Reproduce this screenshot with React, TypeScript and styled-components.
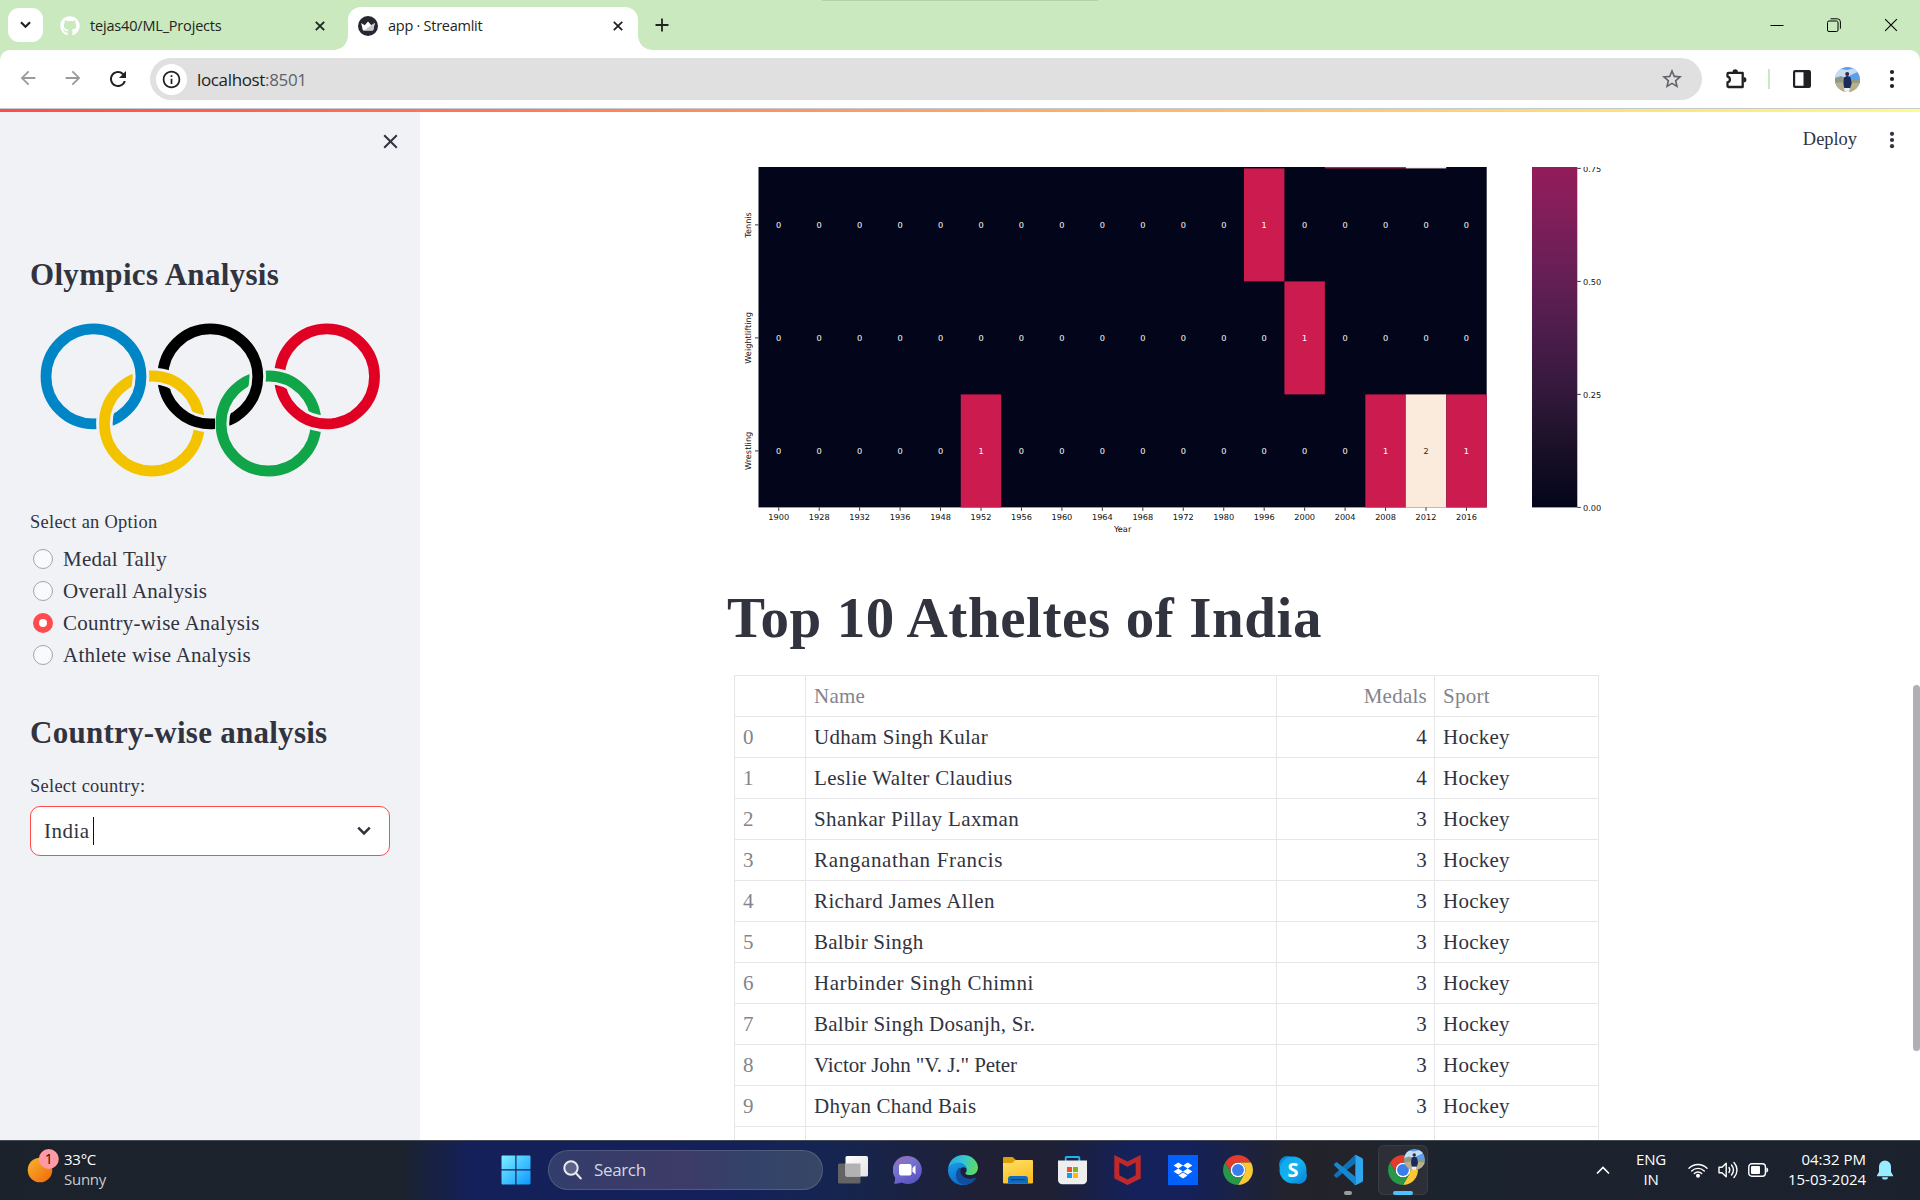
import React from "react";
import styled, { createGlobalStyle } from "styled-components";
import { FaGithub } from "react-icons/fa";
import { MdArrowBack, MdArrowForward, MdRefresh, MdInfoOutline, MdStarBorder } from "react-icons/md";

const GlobalStyle = createGlobalStyle`
  * { box-sizing: border-box; }
  html, body { margin: 0; padding: 0; overflow: hidden; }
`;

const serif = `"Source Serif Pro", "Liberation Serif", serif`;
const ui = `"Segoe UI", "Open Sans", "Noto Sans", sans-serif`;
const ink = "#31333f";

const Screen = styled.div`
  width: 1920px;
  height: 1200px;
  display: flex;
  flex-direction: column;
  background: #fff;
  overflow: hidden;
`;

/* ---------- browser chrome ---------- */

const TabStrip = styled.div`
  position: relative;
  height: 50px;
  flex: none;
  display: flex;
  align-items: center;
  background: #cae9be;
  font-family: ${ui};
  color: #1f2420;
`;

const TopShade = styled.div`
  position: absolute;
  left: 822px;
  top: 0;
  width: 276px;
  height: 1px;
  background: #b5d1ab;
`;

const TabSearch = styled.div`
  width: 35px;
  height: 34px;
  margin-left: 8px;
  border-radius: 11px;
  background: #fff;
  display: grid;
  place-items: center;
`;

const Tab = styled.div<{ $active?: boolean }>`
  position: relative;
  display: flex;
  align-items: center;
  width: ${(p) => (p.$active ? 290 : 289)}px;
  height: 43px;
  margin-top: 7px;
  margin-left: ${(p) => (p.$active ? 0 : 16)}px;
  padding: ${(p) => (p.$active ? "0 15px 6px 10px" : "0 23px 6px 1px")};
  background: ${(p) => (p.$active ? "#fff" : "transparent")};
  border-radius: 13px 13px 0 0;

  &::before,
  &::after {
    content: "";
    display: ${(p) => (p.$active ? "block" : "none")};
    position: absolute;
    bottom: 0;
    width: 14px;
    height: 14px;
  }
  &::before {
    left: -14px;
    background: radial-gradient(circle at 0 0, transparent 13.5px, #fff 14px);
  }
  &::after {
    right: -14px;
    background: radial-gradient(circle at 100% 0, transparent 13.5px, #fff 14px);
  }
`;

const TabTitle = styled.span<{ $ls: number }>`
  flex: 1;
  margin-left: 10px;
  font-size: 14.5px;
  line-height: 20px;
  letter-spacing: ${(p) => p.$ls}px;
  white-space: nowrap;
`;

const NewTab = styled.div`
  margin-left: 16px;
  width: 16px;
  height: 16px;
  display: grid;
`;

const WindowButtons = styled.div`
  margin-left: auto;
  margin-right: 22px;
  display: flex;
  gap: 43px;
`;

const ToolbarBack = styled.div`
  flex: none;
  background: #cae9be;
`;

const Toolbar = styled.div`
  height: 58px;
  display: flex;
  align-items: center;
  background: #fff;
  border-radius: 10px 10px 0 0;
`;

const NavButtons = styled.div`
  display: flex;
  flex: none;
  width: 150px;
  padding-left: 17px;
  gap: 22.5px;
  color: #202124;
`;

const NavButton = styled.span<{ $dim?: boolean }>`
  display: flex;
  opacity: ${(p) => (p.$dim ? 0.45 : 1)};
`;

const UrlBar = styled.div`
  flex: none;
  width: 1552px;
  height: 42px;
  border-radius: 21px;
  background: #e0e0e0;
  display: flex;
  align-items: center;
  padding: 0 18px 0 6px;
  font-family: ${ui};
  font-size: 17px;
  color: #202124;
`;

const InfoBadge = styled.span`
  width: 31px;
  height: 31px;
  border-radius: 50%;
  background: #fff;
  display: grid;
  place-items: center;
  margin-right: 10px;
`;

const UrlText = styled.span`
  flex: 1;
  letter-spacing: -0.35px;
  span { color: #5f6368; }
`;

const ToolItem = styled.span<{ $gap: number }>`
  display: flex;
  flex: none;
  margin-left: ${(p) => p.$gap}px;
`;

const Divider = styled.i`
  width: 2px;
  height: 20px;
  background: #cae9be;
`;

const Hairline = styled.div`
  flex: none;
  height: 1px;
  background: #c3cbd0;
`;

const Decoration = styled.div`
  flex: none;
  height: 3px;
  background: linear-gradient(90deg, #ff4b4b, #fffd80);
`;

/* ---------- app ---------- */

const AppBody = styled.div`
  flex: 1;
  min-height: 0;
  display: flex;
  font-family: ${serif};
  color: ${ink};
`;

const Sidebar = styled.aside`
  width: 420px;
  flex: none;
  padding: 0 30px;
  background: #f0f2f6;
  display: flex;
  flex-direction: column;
`;

const CloseRow = styled.div`
  height: 143px;
  padding-top: 22px;
  display: flex;
  justify-content: flex-end;
  align-items: flex-start;
  margin-right: -8px;
`;

const SideHeading = styled.h2<{ $ls: number }>`
  margin: 0;
  font-size: 31px;
  line-height: 40px;
  font-weight: 600;
  white-space: nowrap;
  letter-spacing: ${(p) => p.$ls}px;
`;

const RingsImage = styled.svg`
  display: block;
  width: 360px;
  height: 176px;
  margin-top: 16px;
`;

const Label = styled.div<{ $top: number }>`
  margin-top: ${(p) => p.$top}px;
  font-size: 18.4px;
  line-height: 24px;
  letter-spacing: 0.3px;
`;

const RadioGroup = styled.div`
  margin: 9px 0 42px;
`;

const RadioRow = styled.div`
  height: 32px;
  display: flex;
  align-items: center;
  gap: 10px;
  padding-left: 3px;
  font-size: 21px;
  line-height: 32px;
  letter-spacing: 0.23px;
`;

const RadioMark = styled.span<{ $on?: boolean }>`
  width: 20px;
  height: 20px;
  border-radius: 50%;
  background: ${(p) => (p.$on ? "#fff" : "#f9fafc")};
  border: ${(p) => (p.$on ? "6.5px solid #ff4b4b" : "1.2px solid #a3a4ad")};
`;

const SelectBox = styled.div`
  margin-top: 8px;
  height: 50px;
  border: 1px solid #ff4b4b;
  border-radius: 10px;
  background: #fff;
  display: flex;
  align-items: center;
  padding: 0 18px 0 13px;
  font-size: 21px;
  letter-spacing: 0.5px;
`;

const Caret = styled.i`
  width: 1px;
  height: 28px;
  margin: 0 auto 0 3px;
  background: #111;
`;

const Main = styled.main`
  flex: 1;
  min-width: 0;
  display: flex;
  flex-direction: column;
  position: relative;
  overflow: hidden;
`;

const AppHeader = styled.header`
  height: 55px;
  flex: none;
  display: flex;
  justify-content: flex-end;
  align-items: center;
  padding-right: 24px;
  font-size: 18.4px;
  gap: 31px;
`;

const Content = styled.div`
  flex: 1;
  min-height: 0;
  width: 880px;
  margin-left: 307px;
  overflow: hidden;
`;

const Heatmap = styled.svg`
  display: block;
  width: 880px;
  height: 378px;
  font-family: "DejaVu Sans", sans-serif;
  font-size: 8.2px;
  text-rendering: geometricPrecision;
`;

const Title = styled.h1`
  margin: 38px 0 0;
  font-size: 57px;
  line-height: 70px;
  font-weight: 700;
  letter-spacing: 0.6px;
  white-space: nowrap;
`;

const Table = styled.div`
  margin: 22px 0 0 7px;
  width: 865px;
  border-top: 1px solid #e6e6e9;
  border-left: 1px solid #e6e6e9;
`;

const TableRow = styled.div<{ $head?: boolean }>`
  display: grid;
  grid-template-columns: 71px 471px 158px 164px;
  height: 41px;
  font-size: 21px;
  line-height: 40px;
  letter-spacing: 0.25px;
  color: ${(p) => (p.$head ? "#83848c" : ink)};
`;

const Cell = styled.div<{ $right?: boolean; $muted?: boolean; $ls?: number }>`
  border-right: 1px solid #e6e6e9;
  border-bottom: 1px solid #e6e6e9;
  padding: 0 7px 0 8px;
  text-align: ${(p) => (p.$right ? "right" : "left")};
  white-space: nowrap;
  ${(p) => (p.$muted ? "color: #83848c;" : "")}
  ${(p) => (p.$ls !== undefined ? `letter-spacing: ${p.$ls}px;` : "")}
`;

const ScrollThumb = styled.div`
  position: absolute;
  right: 0;
  top: 573px;
  width: 7px;
  height: 366px;
  border-radius: 4px;
  background: #afafb5;
`;

/* ---------- taskbar ---------- */

const Taskbar = styled.footer`
  height: 60px;
  flex: none;
  display: flex;
  align-items: center;
  padding-bottom: 1px;
  border-top: 1px solid #454b55;
  background: linear-gradient(
    90deg,
    #1c222b 0,
    #1c232d 400px,
    #14205a 470px,
    #14205a 730px,
    #152551 830px,
    #1f2035 980px,
    #1f2033 1050px,
    #14215a 1130px,
    #14215a 1190px,
    #22232b 1290px,
    #22242a 1350px,
    #1b232e 1450px,
    #1b222d 100%
  );
  font-family: ${ui};
  font-size: 15px;
  line-height: 20px;
  color: #fff;
`;

const Weather = styled.div`
  width: 501px;
  padding-left: 26px;
  padding-bottom: 4px;
  display: flex;
  align-items: center;
  gap: 4px;
  letter-spacing: -0.25px;
`;

const WeatherText = styled.div`
  padding-top: 2px;
  span { display: block; }
  span + span { color: #c9ccd1; }
`;

const SearchBox = styled.div`
  width: 275px;
  height: 40px;
  margin: 0 2.5px 0 17px;
  border-radius: 20px;
  border: 1px solid rgba(255, 255, 255, 0.14);
  background: linear-gradient(90deg, #333d6b, #3d3b67 48%, #33426a 75%, #374664);
  display: flex;
  align-items: center;
  padding-left: 14px;
  gap: 12px;
  font-size: 17px;
  letter-spacing: -0.35px;
  color: #d3d6e2;
`;

const AppSlot = styled.div<{ $active?: boolean }>`
  position: relative;
  width: 50px;
  height: 50px;
  margin: 0 2.5px;
  border-radius: 6px;
  display: grid;
  place-items: center;
  ${(p) => (p.$active ? "background: #2d2f36; box-shadow: inset 0 0 0 1px #3a3c43;" : "")}
`;

const RunMark = styled.i<{ $w: number; $c: string }>`
  position: absolute;
  bottom: 0;
  left: ${(p) => 25 - p.$w / 2}px;
  width: ${(p) => p.$w}px;
  height: 4px;
  border-radius: 2px;
  background: ${(p) => p.$c};
`;

const ProfileBadge = styled.span`
  position: absolute;
  right: 3px;
  top: 4px;
  display: flex;
`;

const Tray = styled.div`
  margin-left: auto;
  padding-right: 27px;
  display: flex;
  align-items: center;
`;

const TwoLines = styled.div<{ $w: number; $align: string; $ls: number }>`
  width: ${(p) => p.$w}px;
  padding-bottom: 2px;
  text-align: ${(p) => p.$align};
  letter-spacing: ${(p) => p.$ls}px;
  white-space: nowrap;
`;

const TrayIcons = styled.div`
  display: flex;
  align-items: center;
  gap: 10px;
  margin: 0 19px 0 -4px;
`;

const Clock = styled.div`
  display: flex;
  align-items: center;
  gap: 11px;
`;

/* ---------- drawings ---------- */

const Cross = ({ size = 10, w = 1.8, color = "#1f2420" }) => (
  <svg width={size} height={size} viewBox="0 0 10 10">
    <path d="M.8.8l8.4 8.4M9.2.8L.8 9.2" stroke={color} strokeWidth={(w * 10) / size} />
  </svg>
);

const Chevron = ({ w = 12, sw = 2.4, color = ink }) => (
  <svg width={w} height={w * 0.66} viewBox="0 0 12 8">
    <path d="M1 1.4l5 5 5-5" fill="none" stroke={color} strokeWidth={sw} />
  </svg>
);

const Dots = ({ gap = 7, color = "#202124" }) => (
  <svg width="8" height="22" viewBox="-4 -11 8 22">
    {[-1, 0, 1].map((n) => (
      <circle key={n} cy={n * gap} r="2.1" fill={color} />
    ))}
  </svg>
);

const StreamlitMark = () => (
  <svg width="20" height="20" viewBox="0 0 20 20">
    <circle cx="10" cy="10" r="10" fill="#262730" />
    <path d="M3.2 7l3.500 2.200L10 5.600l3.300 3.600L16.800 7l-1.500 6.800c-.1.4-.4.6-.8.6h-9c-.4 0-.7-.2-.8-.6z" fill="#fff" />
    <path d="M13.300 9.200L16.800 7l-1.500 6.800c-.1.4-.4.6-.8.6H6z" fill="#c9c9cc" />
  </svg>
);

const Avatar = ({ size = 25 }) => (
  <svg width={size} height={size} viewBox="0 0 25 25">
    <clipPath id={"av" + size}>
      <circle cx="12.5" cy="12.5" r="12.5" />
    </clipPath>
    <g clipPath={`url(#av${size})`}>
      <rect width="25" height="25" fill="#5c9fe8" />
      <path d="M0 5l6-3 6 1 8-2 5 3-7 3-6 3-12 1z" fill="#c4dcf6" />
      <path d="M0 11l6-2 6 3 13 1v12H0z" fill="#8e9a84" />
      <path d="M0 16l9-1 16 1v9H0z" fill="#b9b08a" />
      <circle cx="12.200" cy="7" r="2" fill="#3a2a2b" />
      <path d="M9 10.500l3.300-1.700 3.200 1.500 1.200 6-1.500 4.700H9.200l-.8-5z" fill="#1a2a5c" />
      <path d="M9.200 21h5.600l-.4 4h-5z" fill="#e8eef6" />
    </g>
  </svg>
);

const Puzzle = () => (
  <svg width="24" height="24" viewBox="0 0 24 24">
    <path
      d="M4.500 6.200h14.200v14.100h-14.200a1 1 0 0 1-1-1v-3.600c3.200-.6 3.200-5.200 0-5.800v-2.700a1 1 0 0 1 1-1z"
      transform="translate(0 -.3)"
      fill="none"
      stroke="#202124"
      strokeWidth="2.300"
      strokeLinejoin="round"
    />
    <path d="M8.500 5.200a2.700 3 0 0 1 5.400 0z" fill="#202124" />
    <path d="M19.500 10a2.900 2.700 0 0 1 0 5.400z" fill="#202124" />
  </svg>
);

const SidePanel = () => (
  <svg width="18" height="18" viewBox="0 0 18 18">
    <rect x="1.100" y="1.100" width="15.800" height="15.800" rx="1" fill="none" stroke="#202124" strokeWidth="2.200" />
    <rect x="10.500" y="1" width="6.500" height="16" fill="#202124" />
  </svg>
);

const upper: [number, number, string][] = [
  [93.5, 376.4, "#0085c7"],
  [210.3, 376.4, "#000"],
  [327, 376.4, "#df0024"],
];
const lower: [number, number, string][] = [
  [151.9, 423.5, "#f4c300"],
  [268.5, 423.5, "#10a548"],
];
/* crossings where an upper ring passes over a lower one */
const overlaps: [number, number, number][] = [
  [0, 141, 377],
  [1, 199, 422],
  [1, 258, 377],
  [2, 316, 422],
];

const Ring = ({ cx, cy, color }: { cx: number; cy: number; color: string }) => (
  <>
    <circle cx={cx} cy={cy} r="47.5" fill="none" stroke="#f0f2f6" strokeWidth="16.5" />
    <circle cx={cx} cy={cy} r="47.5" fill="none" stroke={color} strokeWidth="10.8" />
  </>
);

const Rings = () => (
  <RingsImage viewBox="30 311 360 176">
    {upper.concat(lower).map(([x, y, c]) => (
      <Ring key={x} cx={x} cy={y} color={c} />
    ))}
    {overlaps.map(([n, x, y], i) => (
      <g key={i}>
        <clipPath id={"over" + i}>
          <rect x={x - 16} y={y - 15} width="32" height="30" shapeRendering="crispEdges" />
        </clipPath>
        <g clipPath={`url(#over${i})`}>
          <Ring cx={upper[n][0]} cy={upper[n][1]} color={upper[n][2]} />
        </g>
      </g>
    ))}
  </RingsImage>
);

const years = [1900, 1928, 1932, 1936, 1948, 1952, 1956, 1960, 1964, 1968, 1972, 1980, 1996, 2000, 2004, 2008, 2012, 2016];
const sports: { name: string; medals: Record<number, number> }[] = [
  { name: "Tennis", medals: { 1996: 1 } },
  { name: "Weightlifting", medals: { 2000: 1 } },
  { name: "Wrestling", medals: { 1952: 1, 2008: 1, 2012: 2, 2016: 1 } },
];
const heat = ["#03051a", "#cb1b4f", "#faebdd"];
const X0 = 758.5;
const CW = 728.2 / 18;
const Y0 = 168.4;
const RH = 113;
const BOTTOM = Y0 + RH * 3;

const MedalHeatmap = () => (
  <Heatmap viewBox="727 167 880 378">
    <defs>
      <linearGradient id="bar" x1="0" y1="1" x2="0" y2="0">
        <stop offset="0" stopColor="#03051a" />
        <stop offset=".2" stopColor="#1e122a" />
        <stop offset=".33" stopColor="#33183c" />
        <stop offset=".5" stopColor="#4b1d4a" />
        <stop offset=".66" stopColor="#641f55" />
        <stop offset=".85" stopColor="#821e5a" />
        <stop offset="1" stopColor="#961c5b" />
      </linearGradient>
    </defs>
    <rect x={X0} y="160" width={CW * 18} height={BOTTOM - 160} fill={heat[0]} />
    <rect x={X0 + CW * 14} y="160" width={CW * 2} height={Y0 - 160} fill={heat[1]} />
    <rect x={X0 + CW * 16} y="160" width={CW} height={Y0 - 160} fill={heat[2]} />
    {sports.map((s, r) => (
      <g key={s.name}>
        {years.map((y, c) => {
          const v = s.medals[y] || 0;
          const cx = X0 + CW * (c + 0.5);
          return (
            <g key={y}>
              {v > 0 && <rect x={X0 + CW * c} y={Y0 + RH * r} width={CW} height={RH} fill={heat[v]} />}
              <text x={cx} y={Y0 + RH * (r + 0.5) + 3} textAnchor="middle" fill={v === 2 ? "#262626" : "#fff"}>
                {v}
              </text>
            </g>
          );
        })}
        <path d={`M${X0 - 3.5} ${Y0 + RH * (r + 0.5)}h3.5`} stroke="#222" strokeWidth=".9" />
        <text transform={`translate(751 ${Y0 + RH * (r + 0.5)}) rotate(-90)`} textAnchor="middle" fill="#111">
          {s.name}
        </text>
      </g>
    ))}
    {years.map((y, c) => (
      <g key={y}>
        <path d={`M${X0 + CW * (c + 0.5)} ${BOTTOM}v3.5`} stroke="#222" strokeWidth=".9" />
        <text x={X0 + CW * (c + 0.5)} y="519.9" textAnchor="middle" fill="#111">
          {y}
        </text>
      </g>
    ))}
    <text x={X0 + CW * 9} y="531.7" textAnchor="middle" fill="#111">
      Year
    </text>
    <rect x="1532" y="160" width="45.3" height={BOTTOM - 160} fill="url(#bar)" />
    {["0.75", "0.50", "0.25", "0.00"].map((t, i) => (
      <g key={t}>
        <path d={`M1577.3 ${Y0 + RH * i}h3.5`} stroke="#222" strokeWidth=".9" />
        <text x="1583" y={Y0 + RH * i + 3.3} fill="#111">
          {t}
        </text>
      </g>
    ))}
  </Heatmap>
);

const SunIcon = () => (
  <svg width="34" height="38" viewBox="0 0 34 38">
    <defs>
      <linearGradient id="sun" x1="0" y1="0" x2="1" y2="1">
        <stop offset="0" stopColor="#f8b62c" />
        <stop offset="1" stopColor="#f0660a" />
      </linearGradient>
    </defs>
    <circle cx="14" cy="21" r="12.300" fill="url(#sun)" />
    <circle cx="22.800" cy="10" r="10" fill="#ff99a4" />
    <text x="22.600" y="15" textAnchor="middle" fontSize="14" fill="#111">
      1
    </text>
  </svg>
);

const WindowsLogo = () => (
  <svg width="30" height="30" viewBox="0 0 30 30">
    <defs>
      <linearGradient id="win" x1="0" y1="0" x2="1" y2="1">
        <stop offset="0" stopColor="#7df0ff" />
        <stop offset="1" stopColor="#0a98ff" />
      </linearGradient>
    </defs>
    <path d="M.5 1.500a1 1 0 0 1 1-1h12.800v13.800H.5zM15.500.5h13a1 1 0 0 1 1 1v12.800h-14zM.5 15.500h13.800v14H1.500a1 1 0 0 1-1-1zM15.500 15.500h14v13a1 1 0 0 1-1 1h-13z" fill="url(#win)" />
  </svg>
);

const TaskView = () => (
  <svg width="30" height="30" viewBox="0 0 30 30">
    <defs>
      <linearGradient id="tv" x1="0" y1="0" x2="1" y2="1">
        <stop offset="0" stopColor="#fff" />
        <stop offset="1" stopColor="#e2e2e2" />
      </linearGradient>
    </defs>
    <rect x="0" y="8.500" width="22.500" height="20" rx="1.500" fill="#646466" />
    <rect x="7.500" y="1" width="22.500" height="20.500" rx="1.500" fill="url(#tv)" />
    <path d="M7.500 8.500h15v13H9a1.500 1.500 0 0 1-1.500-1.500z" fill="#b2b2b3" />
  </svg>
);

const ChatIcon = () => (
  <svg width="30" height="30" viewBox="0 0 30 30">
    <defs>
      <linearGradient id="chat" x1="0" y1="0" x2=".6" y2="1">
        <stop offset="0" stopColor="#a16ba8" />
        <stop offset=".4" stopColor="#7a74cf" />
        <stop offset="1" stopColor="#5a55c4" />
      </linearGradient>
    </defs>
    <path d="M15 1a14 14 0 1 1-6.500 26.500c-2 .9-5 1.500-7.500 1 1-2 1.300-4.200 1-6A14 14 0 0 1 15 1z" fill="url(#chat)" />
    <rect x="6" y="9" width="12.500" height="11.500" rx="2" fill="#fff" />
    <path d="M19.500 13l3-2.800v9.200l-3-2.800z" fill="#fff" />
  </svg>
);

const EdgeIcon = () => (
  <svg width="30" height="30" viewBox="0 0 30 30">
    <defs>
      <linearGradient id="eg" x1="0" y1=".3" x2="1" y2=".5">
        <stop offset="0" stopColor="#2aa9e0" />
        <stop offset=".5" stopColor="#36c6d0" />
        <stop offset="1" stopColor="#5fdc5a" />
      </linearGradient>
      <linearGradient id="eb" x1="0" y1="0" x2=".3" y2="1">
        <stop offset="0" stopColor="#1a9be4" />
        <stop offset="1" stopColor="#0a6fd0" />
      </linearGradient>
    </defs>
    <path d="M.2 13.500C1 5.500 7.300 0 15 0c9 0 15 6.500 15 12.500 0 4.500-3.500 7.600-8 7.600-3 0-4.600-.8-4.600-1.800 0-.7 1.300-1.300 1.300-3.600 0-3-3-6-7.700-6C5.500 8.700 1.500 11 .2 13.500z" fill="url(#eg)" />
    <path d="M0 15C.5 10.500 5 7.500 10.500 7.500c4.700 0 8.200 3.400 8.200 7 0-2.500-4.500-3.600-6.800-.4-3 4.300-1 10.600 3.600 13.400l4 2A15 15 0 0 1 0 15z" fill="url(#eb)" />
    <path d="M11.500 12.700c-6 4-4.500 16 5.300 17 4.900.2 8.800-2.500 10.900-6.200.3-.6-.2-1-.8-.7-5 2.500-12 .5-14-4.300-.8-2-.6-4.200.3-5.600z" fill="#114f9e" />
  </svg>
);

const FolderIcon = () => (
  <svg width="30" height="30" viewBox="0 0 30 30">
    <defs>
      <linearGradient id="fo" x1="0" y1="0" x2=".4" y2="1">
        <stop offset="0" stopColor="#ffe06a" />
        <stop offset="1" stopColor="#fcbf21" />
      </linearGradient>
    </defs>
    <path d="M0 3a1 1 0 0 1 1-1h8.500L13 5l-3 4H0z" fill="#e09d06" />
    <path d="M0 8h9l3.500-3H29a1 1 0 0 1 1 1v21.500a1 1 0 0 1-1 1H1a1 1 0 0 1-1-1z" fill="url(#fo)" />
    <path d="M5 28.500V24a3 3 0 0 1 3-3h14a3 3 0 0 1 3 3v4.500z" fill="#0f6cc0" />
    <path d="M8.500 24.700h13" stroke="#0a3f7d" strokeWidth="1.300" strokeLinecap="round" />
  </svg>
);

const StoreIcon = () => (
  <svg width="30" height="30" viewBox="0 0 30 30">
    <path d="M7.700 6V2.700a.7.700 0 0 1 .7-.7h12.200a.7.700 0 0 1 .7.700V6" fill="none" stroke="#1cb4ee" strokeWidth="1.900" />
    <path d="M0 5.500h29v19.500a4.300 4.300 0 0 1-4.300 4.300H4.300A4.300 4.300 0 0 1 0 25z" fill="#eeeeef" />
    <path d="M9 12h5v5H9z" fill="#f0502a" />
    <path d="M15 12h5v5h-5z" fill="#7fb80c" />
    <path d="M9 18h5v5H9z" fill="#08a3ee" />
    <path d="M15 18h5v5h-5z" fill="#fdb80a" />
  </svg>
);

const McAfeeIcon = () => (
  <svg width="30" height="30" viewBox="0 0 30 30">
    <path d="M1.300 0L14.500 6.600 27.700 0v23.500L14.500 30 1.300 23.500zM6.300 7.500v12.800l8.200 4.200 8.200-4.200V7.500l-8.200 4.300z" fill="#c0292b" fillRule="evenodd" />
  </svg>
);

const DropboxIcon = () => (
  <svg width="30" height="30" viewBox="0 0 30 30">
    <path d="M0 0h30v30H0z" fill="#0061fe" />
    <path d="M10.300 7.500l4.700 3-4.700 3-4.700-3zM19.700 7.500l4.700 3-4.700 3-4.700-3zM10.300 13.500l4.700 3-4.700 3-4.700-3zM19.700 13.500l4.700 3-4.700 3-4.700-3zM15 17.600l4.600 2.900-4.600 2.900-4.600-2.900z" fill="#fff" />
  </svg>
);

const ChromeIcon = () => (
  <svg width="30" height="30" viewBox="0 0 48 48">
    <circle cx="24" cy="24" r="12" fill="#fff" />
    <path d="M24 12h20.780a24 24 0 0 0-41.560 0L13.610 30A12 12 0 0 1 24 12z" fill="#e33b2e" />
    <path d="M34.390 30L24 48a24 24 0 0 0 20.780-36H24a12 12 0 0 1 10.390 18z" fill="#fcc934" />
    <path d="M13.610 30L3.220 12A24 24 0 0 0 24 48l10.390-18a12 12 0 0 1-20.780 0z" fill="#269847" />
    <circle cx="24" cy="24" r="9.500" fill="#3b7ded" />
  </svg>
);

const SkypeIcon = () => (
  <svg width="30" height="30" viewBox="0 0 30 30">
    <defs>
      <linearGradient id="sk" x1="0" y1="0" x2="1" y2="1">
        <stop offset="0" stopColor="#0fa0e8" />
        <stop offset=".5" stopColor="#12b4f2" />
        <stop offset="1" stopColor="#0b7ed4" />
      </linearGradient>
    </defs>
    <circle cx="9.500" cy="9.500" r="8.500" fill="#0a8bd8" />
    <circle cx="20.500" cy="20.500" r="8.500" fill="#0f8ce0" />
    <circle cx="15" cy="15" r="13.500" fill="url(#sk)" />
    <text x="15" y="22.300" textAnchor="middle" fontSize="20" fontWeight="700" fill="#fff">
      S
    </text>
  </svg>
);

const CodeIcon = () => (
  <svg width="30" height="30" viewBox="0 0 30 30">
    <path d="M1.300 19.600a1 1 0 0 0 0 1.500l1.500 1.300c.5.400 1 .4 1.500 0L22 8.500V0z" fill="#0e72b8" />
    <path d="M1.300 10.400a1 1 0 0 1 0-1.500l1.500-1.300c.5-.4 1-.4 1.500 0L22 21.500V30z" fill="#1787cf" />
    <path d="M21.500 0c.6-.2 1-.1 1.500.1l6 2.900c.6.300 1 .9 1 1.600v20.800c0 .7-.4 1.300-1 1.600l-6 2.900c-.5.200-1 .3-1.500 0 .5-.1.800-.8.800-1.400V1.500c0-.7-.3-1.300-.8-1.500z" fill="#2ea7ef" />
  </svg>
);

const WifiIcon = () => (
  <svg width="20" height="16" viewBox="0 0 20 16" fill="none" stroke="#fff" strokeWidth="1.400" strokeLinecap="round">
    <path d="M1 6.300a12.700 12.700 0 0 1 18 0M3.700 9a8.900 8.900 0 0 1 12.600 0M6.300 11.600a5.200 5.200 0 0 1 7.400 0" />
    <circle cx="10" cy="13.800" r="1.300" fill="#fff" />
  </svg>
);

const SpeakerIcon = () => (
  <svg width="20" height="18" viewBox="0 0 20 18" fill="none" stroke="#fff" strokeWidth="1.400" strokeLinecap="round" strokeLinejoin="round">
    <path d="M1 6.300h3l4.200-4v13.400L4 11.700H1zM11 6.500c1 1.500 1 3.500 0 5M13.500 4c2.400 3 2.400 7 0 10M16 1.500c4 4.500 4 10.500 0 15" />
  </svg>
);

const BatteryIcon = () => (
  <svg width="21" height="14" viewBox="0 0 21 14">
    <rect x=".8" y=".8" width="16.600" height="12.400" rx="3" fill="none" stroke="#fff" strokeWidth="1.400" />
    <rect x="3" y="3" width="9" height="8" rx="1" fill="#fff" />
    <path d="M18.300 4.500c2.500 0 2.500 5 0 5z" fill="#fff" />
  </svg>
);

const BellIcon = () => (
  <svg width="16" height="20" viewBox="0 0 16 20">
    <path d="M8 .5a6 6 0 0 1 6 6V12l2 3.200v1H0v-1L2 12V6.500a6 6 0 0 1 6-6zM5 17.200h6a3 2.400 0 0 1-6 0z" fill="#99ebff" />
  </svg>
);

const options = ["Medal Tally", "Overall Analysis", "Country-wise Analysis", "Athlete wise Analysis"];

/* name, medals, letter spacing */
const athletes: [string, number, number][] = [
  ["Udham Singh Kular", 4, 0.28],
  ["Leslie Walter Claudius", 4, 0.31],
  ["Shankar Pillay Laxman", 3, 0.38],
  ["Ranganathan Francis", 3, 0.65],
  ["Richard James Allen", 3, 0.37],
  ["Balbir Singh", 3, 0.23],
  ["Harbinder Singh Chimni", 3, 0.56],
  ["Balbir Singh Dosanjh, Sr.", 3, 0.24],
  ["Victor John \"V. J.\" Peter", 3, -0.06],
  ["Dhyan Chand Bais", 3, 0.23],
  ["Prithipal Singh", 3, 0.25],
];

export default function App() {
  return (
    <Screen>
      <GlobalStyle />
      <TabStrip>
        <TopShade />
        <TabSearch>
          <Chevron w={11} color="#1f2420" />
        </TabSearch>
        <Tab>
          <FaGithub size={20} color="#fff" />
          <TabTitle $ls={-0.18}>tejas40/ML_Projects</TabTitle>
          <Cross />
        </Tab>
        <Tab $active>
          <StreamlitMark />
          <TabTitle $ls={-0.26}>app · Streamlit</TabTitle>
          <Cross />
        </Tab>
        <NewTab>
          <svg width="16" height="16" viewBox="0 0 16 16">
            <path d="M8 1.500v13M1.500 8h13" stroke="#1f2420" strokeWidth="1.800" />
          </svg>
        </NewTab>
        <WindowButtons>
          <svg width="14" height="14" viewBox="0 0 14 14">
            <path d="M.5 7.500h13" stroke="#000" />
          </svg>
          <svg width="14" height="14" viewBox="0 0 14 14" fill="none" stroke="#000">
            <rect x=".5" y="3" width="10.500" height="10.500" rx="1.500" />
            <path d="M3.500.8h7A3 3 0 0 1 13.400 3.700v7" />
          </svg>
          <Cross size={14} w={1.1} color="#000" />
        </WindowButtons>
      </TabStrip>
      <ToolbarBack>
        <Toolbar>
          <NavButtons>
            <NavButton $dim><MdArrowBack size={22} /></NavButton>
            <NavButton $dim><MdArrowForward size={22} /></NavButton>
            <NavButton><MdRefresh size={24} /></NavButton>
          </NavButtons>
          <UrlBar>
            <InfoBadge><MdInfoOutline size={21} /></InfoBadge>
            <UrlText>
              localhost<span>:8501</span>
            </UrlText>
            <MdStarBorder size={24} color="#5f6368" />
          </UrlBar>
          <ToolItem $gap={22}><Puzzle /></ToolItem>
          <ToolItem $gap={20}><Divider /></ToolItem>
          <ToolItem $gap={23}><SidePanel /></ToolItem>
          <ToolItem $gap={24}><Avatar /></ToolItem>
          <ToolItem $gap={28}><Dots /></ToolItem>
        </Toolbar>
      </ToolbarBack>
      <Hairline />
      <Decoration />

      <AppBody>
        <Sidebar>
          <CloseRow>
            <Cross size={15} w={2} color={ink} />
          </CloseRow>
          <SideHeading $ls={0.32}>Olympics Analysis</SideHeading>
          <Rings />
          <Label $top={23}>Select an Option</Label>
          <RadioGroup>
            {options.map((o, i) => (
              <RadioRow key={o}>
                <RadioMark $on={i === 2} />
                {o}
              </RadioRow>
            ))}
          </RadioGroup>
          <SideHeading $ls={0.26}>Country-wise analysis</SideHeading>
          <Label $top={21}>Select country:</Label>
          <SelectBox>
            India
            <Caret />
            <Chevron w={14} sw={2.2} />
          </SelectBox>
        </Sidebar>
        <Main>
          <AppHeader>
            Deploy
            <Dots gap={6.2} color={ink} />
          </AppHeader>
          <Content>
            <MedalHeatmap />
            <Title>Top 10 Atheltes of India</Title>
            <Table>
              <TableRow $head>
                <Cell />
                <Cell>Name</Cell>
                <Cell $right>Medals</Cell>
                <Cell>Sport</Cell>
              </TableRow>
              {athletes.map(([name, medals, ls], i) => (
                <TableRow key={name}>
                  <Cell $muted>{i}</Cell>
                  <Cell $ls={ls}>{name}</Cell>
                  <Cell $right>{medals}</Cell>
                  <Cell>Hockey</Cell>
                </TableRow>
              ))}
            </Table>
          </Content>
          <ScrollThumb />
        </Main>
      </AppBody>

      <Taskbar>
        <Weather>
          <SunIcon />
          <WeatherText>
            <span>33°C</span>
            <span>Sunny</span>
          </WeatherText>
        </Weather>
        <WindowsLogo />
        <SearchBox>
          <svg width="19" height="20" viewBox="0 0 19 20" fill="none" stroke="#e9ebf2" strokeWidth="2">
            <circle cx="8" cy="8" r="6.700" fill="rgba(255,255,255,.2)" />
            <path d="M12.800 13l5 5.500" strokeLinecap="round" />
          </svg>
          Search
        </SearchBox>
        <AppSlot><TaskView /></AppSlot>
        <AppSlot><ChatIcon /></AppSlot>
        <AppSlot><EdgeIcon /></AppSlot>
        <AppSlot><FolderIcon /></AppSlot>
        <AppSlot><StoreIcon /></AppSlot>
        <AppSlot><McAfeeIcon /></AppSlot>
        <AppSlot><DropboxIcon /></AppSlot>
        <AppSlot><ChromeIcon /></AppSlot>
        <AppSlot><SkypeIcon /></AppSlot>
        <AppSlot>
          <CodeIcon />
          <RunMark $w={8} $c="#9b9ca0" />
        </AppSlot>
        <AppSlot $active>
          <ChromeIcon />
          <ProfileBadge><Avatar size={21} /></ProfileBadge>
          <RunMark $w={20} $c="#4cc2ff" />
        </AppSlot>
        <Tray>
          <svg width="14" height="9" viewBox="0 0 14 9">
            <path d="M1 7.500l6-6 6 6" fill="none" stroke="#fff" strokeWidth="1.700" />
          </svg>
          <TwoLines $w={82} $align="center" $ls={-0.2}>
            ENG
            <br />
            IN
          </TwoLines>
          <TrayIcons>
            <WifiIcon />
            <SpeakerIcon />
            <BatteryIcon />
          </TrayIcons>
          <Clock>
            <TwoLines $w={78} $align="right" $ls={-0.02}>
              04:32 PM
              <br />
              15-03-2024
            </TwoLines>
            <BellIcon />
          </Clock>
        </Tray>
      </Taskbar>
    </Screen>
  );
}
